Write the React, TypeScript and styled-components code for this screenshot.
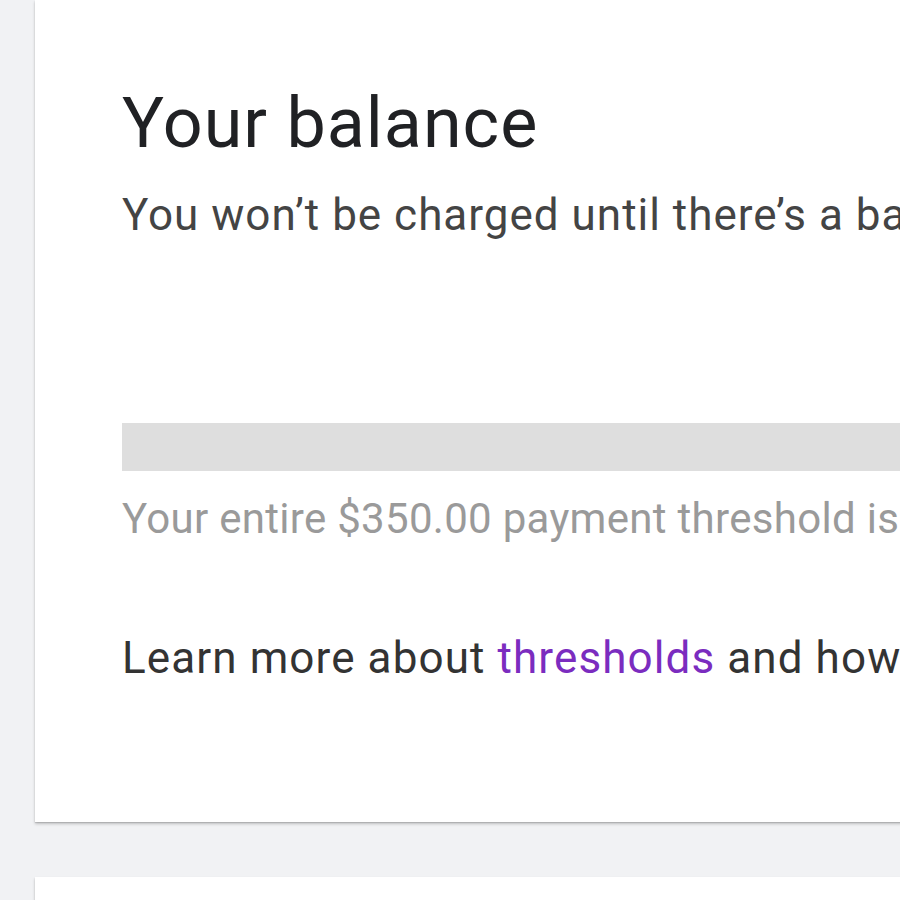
import React from "react";
import styled, { createGlobalStyle } from "styled-components";

const Global = createGlobalStyle`
  html, body {
    margin: 0;
    padding: 0;
    background: #f1f2f4;
    overflow: hidden;
    font-family: Roboto, "Liberation Sans", Arial, sans-serif;
  }
`;

const Page = styled.div`
  display: flex;
  flex-direction: column;
  gap: 55px;
  padding-left: 35px;
  width: 1600px;
`;

const Card = styled.section<{ $short?: boolean }>`
  background: #fff;
  box-shadow: 0 1px 1px rgba(0, 0, 0, 0.12), 0 2px 3px rgba(0, 0, 0, 0.2);
  display: flex;
  flex-direction: column;
  padding: ${(p) => (p.$short ? "0" : "88px 0 142px 87px")};
  min-height: ${(p) => (p.$short ? "200px" : "auto")};
`;

const Title = styled.h1`
  margin: 0;
  font-size: 70px;
  line-height: 70px;
  font-weight: 400;
  letter-spacing: 1px;
  color: #202124;
  white-space: nowrap;
`;

type Tone = "muted" | "body" | "sub";

const Text = styled.p<{ $tone?: Tone; $top: number }>`
  margin: ${(p) => p.$top}px 0 0;
  font-size: ${(p) => (p.$tone === "muted" ? 42 : 44)}px;
  line-height: ${(p) => (p.$tone === "muted" ? 42 : 44)}px;
  letter-spacing: ${(p) =>
    p.$tone === "muted" ? "0.3px" : p.$tone === "sub" ? "1px" : "1.1px"};
  white-space: nowrap;
  color: ${(p) =>
    p.$tone === "muted" ? "#9a9a9a" : p.$tone === "sub" ? "#444" : "#333"};
`;

const Bar = styled.div`
  margin-top: 186px;
  height: 48px;
  width: 1400px;
  background: #dedede;
`;

const Link = styled.a`
  color: #7b2cbf;
  text-decoration: none;
`;

export default function App() {
  return (
    <>
      <Global />
      <Page>
        <Card>
          <Title>Your balance</Title>
          <Text $tone="sub" $top={35}>
            You won’t be charged until there’s a balance of at least $350.00
          </Text>
          <Bar />
          <Text $tone="muted" $top={27}>
            Your entire $350.00 payment threshold is remaining
          </Text>
          <Text $top={96}>
            Learn more about <Link href="#">thresholds</Link> and how you’re charged
          </Text>
        </Card>
        <Card $short />
      </Page>
    </>
  );
}
